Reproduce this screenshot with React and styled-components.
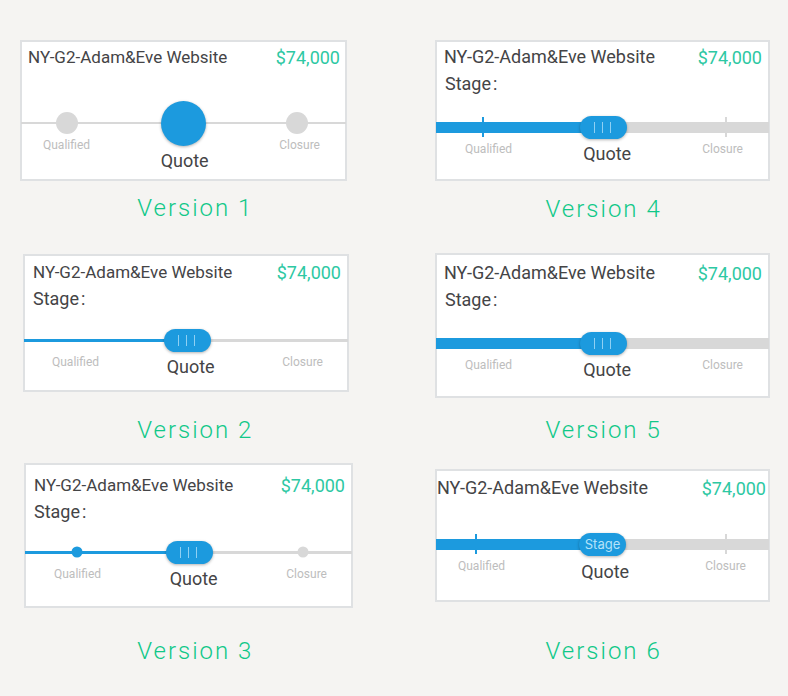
import React, { useId, useState } from "react";
import styled, { createGlobalStyle, css } from "styled-components";

const color = {
  page: "#f5f4f2",
  border: "#dfe1e3",
  blue: "#1c9ade",
  grey: "#d8d8d8",
  text: "#444446",
  muted: "#bdbdbd",
  amount: "#2dc8a3",
  caption: "#10c888",
};

const GlobalStyle = createGlobalStyle`
  * { box-sizing: border-box; }
  body {
    margin: 0;
    min-height: 100vh;
    background: ${color.page};
    color: ${color.text};
    font-family: Roboto, "Liberation Sans", sans-serif;
  }
`;

const Board = styled.main`
  display: grid;
  grid-template-columns: 1fr 1fr;
  column-gap: 80px;
  padding: 40px 18px 31px 20px;
`;

const Column = styled.div`
  display: flex;
  flex-direction: column;
`;

const Version = styled.figure`
  display: flex;
  flex-direction: column;
  margin: ${(p) => p.$before}px 0 0;
`;

const Caption = styled.figcaption`
  margin-top: ${(p) => p.$gap}px;
  padding-left: ${(p) => p.$indent}%;
  font-size: 24px;
  font-weight: 300;
  line-height: 28px;
  letter-spacing: 2px;
  color: ${color.caption};
`;

const Card = styled.article`
  margin-left: ${(p) => p.$inset[0]}px;
  margin-right: ${(p) => p.$inset[1]}px;
  padding: ${(p) => p.$pad[0]}px 0 ${(p) => p.$pad[1]}px;
  border: 2px solid ${color.border};
  background: #fff;
`;

const Header = styled.header`
  display: flex;
  justify-content: space-between;
  padding: 0 ${(p) => p.$sides[1]}px 0 ${(p) => p.$sides[0]}px;
  line-height: 24px;
`;

const Title = styled.h2`
  margin: 0;
  font-size: ${(p) => p.$size}px;
  font-weight: 400;
  white-space: nowrap;
`;

const Amount = styled.span`
  font-size: 18px;
  line-height: 26px;
  height: 24px;
  color: ${color.amount};
`;

const StageLabel = styled.label`
  display: block;
  margin: 3px 0 0 8px;
  font-size: 18px;
  line-height: 24px;
`;

const Colon = styled.span`
  margin-left: 2px;
`;

const SliderBox = styled.div`
  position: relative;
  height: 24px;
  margin: ${(p) => p.$before}px -1px 0;
`;

const grip = css`
  background:
    linear-gradient(#8fd0f3, #8fd0f3) 14px 6px / 1px 11px no-repeat,
    linear-gradient(#8fd0f3, #8fd0f3) 22px 6px / 1px 11px no-repeat,
    linear-gradient(#8fd0f3, #8fd0f3) 30px 6px / 1px 11px no-repeat,
    ${color.blue};
`;

const thumb = css`
  box-sizing: border-box;
  width: ${(p) => (p.$thumb === "circle" ? 45 : 47)}px;
  height: ${(p) => (p.$thumb === "circle" ? 45 : 23)}px;
  border: 0;
  border-radius: 23px;
  background: ${color.blue};
  box-shadow: 0 1px 3px rgba(0, 0, 0, 0.3);
  cursor: grab;
  ${(p) => p.$thumb === "grip" && grip}
`;

const track = css`
  height: ${(p) => p.$bar}px;
  background: ${(p) =>
    p.$filled
      ? `linear-gradient(to right, ${color.blue} var(--value), ${color.grey} var(--value))`
      : color.grey};
`;

const Range = styled.input`
  display: block;
  appearance: none;
  width: 100%;
  height: 24px;
  margin: 0;
  background: none;

  &::-webkit-slider-runnable-track { ${track} }
  &::-webkit-slider-thumb {
    appearance: none;
    margin-top: ${(p) => Math.round((p.$bar - (p.$thumb === "circle" ? 45 : 23)) / 2)}px;
    ${thumb}
  }
  &::-moz-range-track { ${track} }
  &::-moz-range-thumb { ${thumb} }
`;

const Mark = styled.span`
  position: absolute;
  top: 50%;
  left: ${(p) => p.$at}%;
  width: ${(p) => p.$w}px;
  height: ${(p) => p.$h}px;
  transform: translate(-50%, -50%);
  border-radius: ${(p) => (p.$w === p.$h ? "50%" : "0")};
  background: ${(p) => (p.$on ? color.blue : color.grey)};
  pointer-events: none;
`;

const ThumbText = styled.label`
  position: absolute;
  z-index: 2;
  top: 0;
  left: var(--value);
  transform: translateX(-50%);
  font-family: Inter, sans-serif;
  font-size: 13px;
  line-height: 24px;
  color: #b4e2f9;
  pointer-events: none;
`;

const Stages = styled.div`
  display: flex;
  justify-content: space-between;
  align-items: flex-start;
  padding: 0 ${(p) => p.$sides[1]}px 0 ${(p) => p.$sides[0]}px;
`;

const Stage = styled.span`
  font-size: 12px;
  line-height: 20px;
  color: ${color.muted};
`;

const CurrentStage = styled.strong`
  margin-top: ${(p) => p.$drop}px;
  font-size: 18px;
  font-weight: 400;
  line-height: 24px;
`;

const left = [
  { n: 1, before: 0, gap: 13, inset: [0, 8], pad: [3, 6], sides: [6, 5], size: 17, slider: 42, bar: 2, thumb: "circle", start: 100, mark: [22, 22], marks: [14, 85], stages: [21, 25], drop: 14 },
  { n: 2, before: 32, gap: 24, inset: [3, 6], pad: [4, 11], sides: [8, 6], size: 17, stage: true, slider: 17, bar: 3, filled: true, thumb: "grip", start: 101, stages: [27, 24], drop: 3 },
  { n: 3, before: 19, gap: 29, inset: [4, 2], pad: [8, 15], sides: [8, 6], size: 17, stage: true, slider: 16, bar: 3, filled: true, thumb: "grip", start: 101, mark: [11, 11], marks: [16, 85], stages: [28, 24], drop: 3 },
];

const right = [
  { n: 4, before: 0, gap: 14, inset: [0, 0], pad: [3, 13], sides: [7, 6], size: 18, stage: true, slider: 19, bar: 11, filled: true, thumb: "grip", start: 101, mark: [2, 20], marks: [14, 87], stages: [28, 25], drop: 3 },
  { n: 5, before: 30, gap: 18, inset: [0, 0], pad: [6, 14], sides: [7, 6], size: 18, stage: true, slider: 19, bar: 11, filled: true, thumb: "grip", start: 101, stages: [28, 25], drop: 3 },
  { n: 6, before: 25, gap: 35, inset: [0, 0], pad: [5, 16], sides: [0, 2], size: 18, slider: 32, bar: 11, filled: true, thumb: "text", start: 100, mark: [2, 20], marks: [12, 87], stages: [21, 22], drop: 4 },
];

function StageSlider({ id, v }) {
  const [value, setValue] = useState(v.start);
  const percent = value / 2;
  return (
    <SliderBox $before={v.slider} style={{ "--value": `${percent}%` }}>
      <Range
        id={id}
        type="range"
        min="0"
        max="200"
        value={value}
        onChange={(e) => setValue(Number(e.target.value))}
        aria-label="Stage"
        $bar={v.bar}
        $filled={v.filled}
        $thumb={v.thumb}
      />
      {v.marks?.map((at) => (
        <Mark key={at} $at={at} $w={v.mark[0]} $h={v.mark[1]} $on={v.filled && at < percent} />
      ))}
      {v.thumb === "text" && <ThumbText htmlFor={id}>Stage</ThumbText>}
    </SliderBox>
  );
}

function DealVersion({ v, indent }) {
  const id = useId();
  return (
    <Version $before={v.before}>
      <Card $inset={v.inset} $pad={v.pad}>
        <Header $sides={v.sides}>
          <Title $size={v.size}>NY-G2-Adam&amp;Eve Website</Title>
          <Amount>$74,000</Amount>
        </Header>
        {v.stage && (
          <StageLabel htmlFor={id}>
            Stage<Colon>:</Colon>
          </StageLabel>
        )}
        <StageSlider id={id} v={v} />
        <Stages $sides={v.stages}>
          <Stage>Qualified</Stage>
          <CurrentStage $drop={v.drop}>Quote</CurrentStage>
          <Stage>Closure</Stage>
        </Stages>
      </Card>
      <Caption $gap={v.gap} $indent={indent}>Version {v.n}</Caption>
    </Version>
  );
}

export default function App() {
  return (
    <>
      <GlobalStyle />
      <Board>
        <Column>
          {left.map((v) => <DealVersion key={v.n} v={v} indent={35} />)}
        </Column>
        <Column>
          {right.map((v) => <DealVersion key={v.n} v={v} indent={33} />)}
        </Column>
      </Board>
    </>
  );
}
